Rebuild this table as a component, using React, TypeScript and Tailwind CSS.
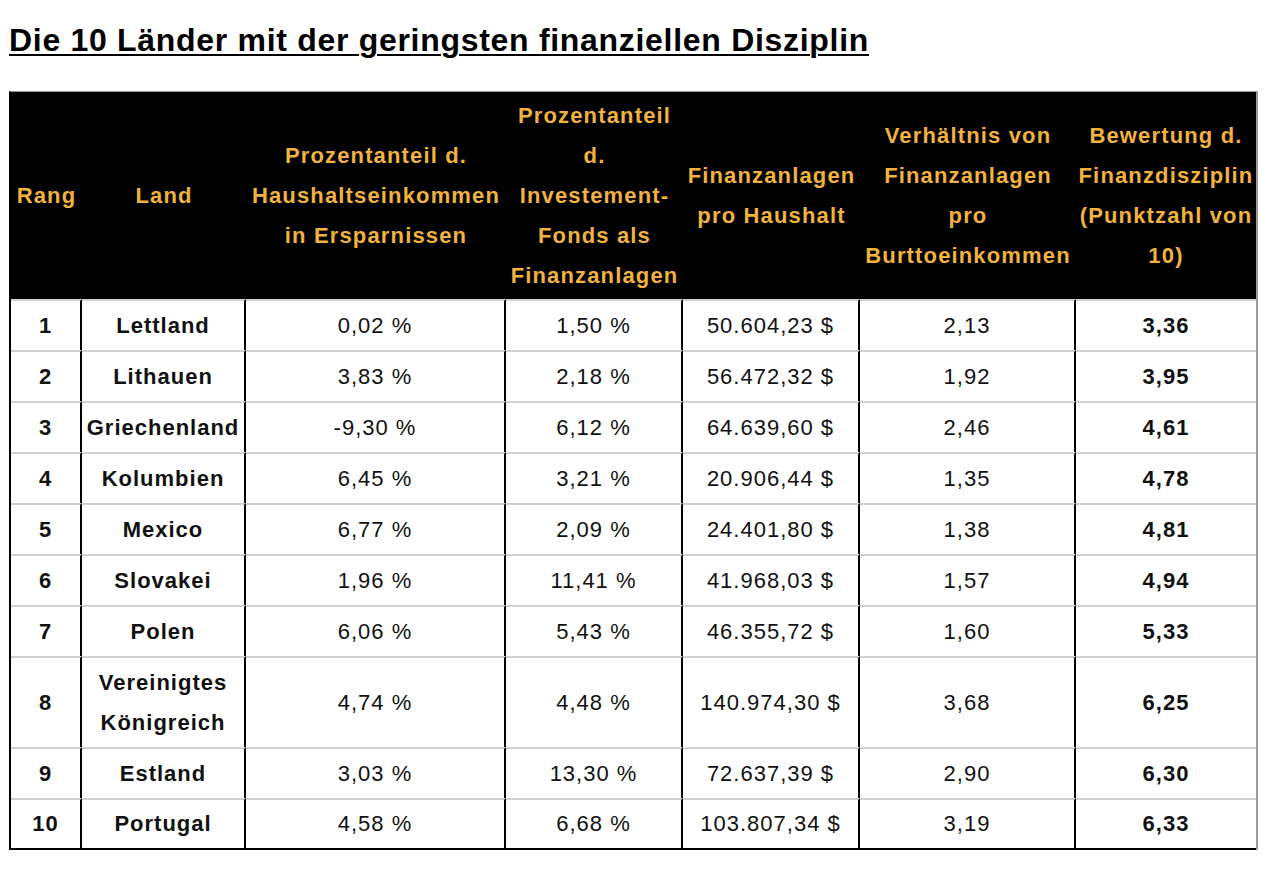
import React from "react";

type Row = {
  rank: string;
  land: React.ReactNode;
  savings: string;
  funds: string;
  assets: string;
  ratio: string;
  score: string;
  tall?: boolean;
};

const rows: Row[] = [
  { rank: "1", land: "Lettland", savings: "0,02 %", funds: "1,50 %", assets: "50.604,23 $", ratio: "2,13", score: "3,36" },
  { rank: "2", land: "Lithauen", savings: "3,83 %", funds: "2,18 %", assets: "56.472,32 $", ratio: "1,92", score: "3,95" },
  { rank: "3", land: "Griechenland", savings: "-9,30 %", funds: "6,12 %", assets: "64.639,60 $", ratio: "2,46", score: "4,61" },
  { rank: "4", land: "Kolumbien", savings: "6,45 %", funds: "3,21 %", assets: "20.906,44 $", ratio: "1,35", score: "4,78" },
  { rank: "5", land: "Mexico", savings: "6,77 %", funds: "2,09 %", assets: "24.401,80 $", ratio: "1,38", score: "4,81" },
  { rank: "6", land: "Slovakei", savings: "1,96 %", funds: "11,41 %", assets: "41.968,03 $", ratio: "1,57", score: "4,94" },
  { rank: "7", land: "Polen", savings: "6,06 %", funds: "5,43 %", assets: "46.355,72 $", ratio: "1,60", score: "5,33" },
  {
    rank: "8",
    land: (
      <>
        Vereinigtes
        <br />
        Königreich
      </>
    ),
    savings: "4,74 %",
    funds: "4,48 %",
    assets: "140.974,30 $",
    ratio: "3,68",
    score: "6,25",
    tall: true,
  },
  { rank: "9", land: "Estland", savings: "3,03 %", funds: "13,30 %", assets: "72.637,39 $", ratio: "2,90", score: "6,30" },
  { rank: "10", land: "Portugal", savings: "4,58 %", funds: "6,68 %", assets: "103.807,34 $", ratio: "3,19", score: "6,33" },
];

const headers: React.ReactNode[] = [
  "Rang",
  "Land",
  <>
    Prozentanteil d.
    <br />
    Haushaltseinkommen
    <br />
    in Ersparnissen
  </>,
  <>
    Prozentanteil
    <br />
    d.
    <br />
    Investement-
    <br />
    Fonds als
    <br />
    Finanzanlagen
  </>,
  <>
    Finanzanlagen
    <br />
    pro Haushalt
  </>,
  <>
    Verhältnis von
    <br />
    Finanzanlagen
    <br />
    pro
    <br />
    Burttoeinkommen
  </>,
  <>
    Bewertung d.
    <br />
    Finanzdisziplin
    <br />
    (Punktzahl von
    <br />
    10)
  </>,
];

function Cell({
  children,
  bold,
  last,
  tall,
  isLastRow,
}: {
  children: React.ReactNode;
  bold?: boolean;
  last?: boolean;
  tall?: boolean;
  isLastRow?: boolean;
}) {
  return (
    <div
      className={
        "flex items-center justify-center text-center leading-[40px] text-[#111] border-t-2 border-t-[#d0d0d0] " +
        (tall ? "h-[91px] " : "h-[51px] ") +
        (bold ? "font-bold " : "font-normal ") +
        (last ? "" : "border-r-2 border-r-black ") +
        (isLastRow ? "border-b-2 border-b-black h-[52px] " : "")
      }
    >
      <div className="whitespace-nowrap">{children}</div>
    </div>
  );
}

export default function App() {
  return (
    <div
      className="bg-white w-[1280px] min-h-[869px] px-[9px] pt-[22px]"
      style={{ fontFamily: '"Liberation Sans", Arial, sans-serif' }}
    >
      <h1 className="text-[32px] leading-[36px] font-bold underline decoration-2 underline-offset-[3px] tracking-[0.7px] text-black">
        Die 10 Länder mit der geringsten finanziellen Disziplin
      </h1>
      <div className="mt-[33px] w-[1249px] border-l-2 border-l-black border-r-2 border-r-[#9a9a9a] border-t border-t-[#9a9a9a] text-[22px] tracking-[1px]">
        <div className="grid grid-cols-[71px_164px_260px_177px_177px_216px_180px]">
          {headers.map((h, i) => (
            <div
              key={i}
              className="h-[207px] bg-black flex items-center justify-center text-center font-bold leading-[40px] tracking-[1.15px] text-[#f1b23e] whitespace-nowrap"
            >
              <div>{h}</div>
            </div>
          ))}
          {rows.map((r, idx) => {
            const lastRow = idx === rows.length - 1;
            return (
              <React.Fragment key={r.rank}>
                <Cell bold tall={r.tall} isLastRow={lastRow}>{r.rank}</Cell>
                <Cell bold tall={r.tall} isLastRow={lastRow}>{r.land}</Cell>
                <Cell tall={r.tall} isLastRow={lastRow}>{r.savings}</Cell>
                <Cell tall={r.tall} isLastRow={lastRow}>{r.funds}</Cell>
                <Cell tall={r.tall} isLastRow={lastRow}>{r.assets}</Cell>
                <Cell tall={r.tall} isLastRow={lastRow}>{r.ratio}</Cell>
                <Cell bold last tall={r.tall} isLastRow={lastRow}>{r.score}</Cell>
              </React.Fragment>
            );
          })}
        </div>
      </div>
    </div>
  );
}
